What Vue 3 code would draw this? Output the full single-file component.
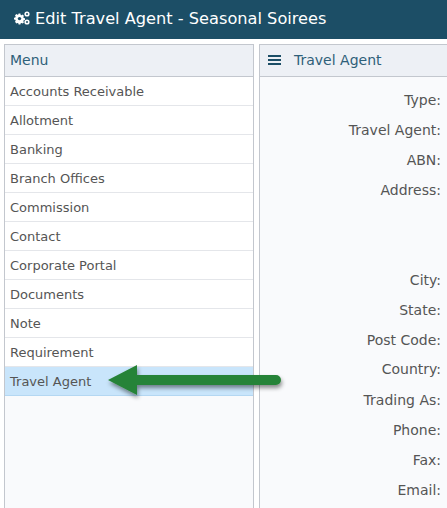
<template>
  <div class="page">
    <header class="topbar">
      <svg class="cogs" viewBox="0 0 16 14" width="16" height="14">
        <g fill="#fff">
          <path d="M5.6 2.6h1.8l.3 1.3.9.4 1.1-.7 1.3 1.3-.7 1.1.4.9 1.3.3v1.8l-1.3.3-.4.9.7 1.1-1.3 1.3-1.1-.7-.9.4-.3 1.3H5.6l-.3-1.3-.9-.4-1.1.7L2 10.8l.7-1.1-.4-.9L1 8.5V6.7l1.3-.3.4-.9L2 4.4l1.3-1.3 1.1.7.9-.4z" transform="translate(-1 0)"/>
          <circle cx="13" cy="3" r="2.6"/>
          <circle cx="13" cy="11" r="2.6"/>
        </g>
        <circle cx="5.5" cy="7.6" r="1.7" fill="#1c4e66"/>
        <circle cx="13" cy="3" r="1" fill="#1c4e66"/>
        <circle cx="13" cy="11" r="1" fill="#1c4e66"/>
      </svg>
      <span>Edit Travel Agent - Seasonal Soirees</span>
    </header>

    <div class="columns">
      <aside class="panel menu">
        <div class="panel-head">Menu</div>
        <ul>
          <li v-for="item in menu" :key="item" :class="{ active: item === 'Travel Agent' }">{{ item }}</li>
        </ul>
      </aside>

      <section class="panel detail">
        <div class="panel-head">
          <span class="burger"><i></i><i></i><i></i></span>
          Travel Agent
        </div>
        <div class="fields">
          <div v-for="f in fields" :key="f.label" class="field" :style="{ height: f.h + 'px' }">{{ f.label }}:</div>
        </div>
      </section>
    </div>

    <svg class="arrow" width="190" height="60" viewBox="0 0 190 60">
      <defs>
        <filter id="sh" x="-10%" y="-30%" width="120%" height="170%">
          <feDropShadow dx="1" dy="3" stdDeviation="2" flood-color="#000" flood-opacity="0.45" />
        </filter>
      </defs>
      <path filter="url(#sh)" fill="#288337"
        d="M8 30 L37 15 V25 H176 a5 5 0 0 1 0 10 H37 V45 Z" />
    </svg>
  </div>
</template>

<script setup>
const menu = [
  'Accounts Receivable',
  'Allotment',
  'Banking',
  'Branch Offices',
  'Commission',
  'Contact',
  'Corporate Portal',
  'Documents',
  'Note',
  'Requirement',
  'Travel Agent'
]

const fields = [
  { label: 'Type', h: 30 },
  { label: 'Travel Agent', h: 30 },
  { label: 'ABN', h: 30 },
  { label: 'Address', h: 90 },
  { label: 'City', h: 30 },
  { label: 'State', h: 30 },
  { label: 'Post Code', h: 29 },
  { label: 'Country', h: 31 },
  { label: 'Trading As', h: 30 },
  { label: 'Phone', h: 30 },
  { label: 'Fax', h: 30 },
  { label: 'Email', h: 30 }
]
</script>

<style>
html, body {
  margin: 0;
  height: 100%;
  overflow: hidden;
}
</style>

<style scoped>
.page {
  position: relative;
  width: 447px;
  height: 508px;
  overflow: hidden;
  background: #fff;
  font-family: "DejaVu Sans", sans-serif;
  font-size: 13px;
  color: #555;
}

.topbar {
  height: 39px;
  background: #1c4e66;
  color: #fff;
  font-size: 16.2px;
  display: flex;
  align-items: center;
  gap: 5px;
  padding: 0 0 3px 14px;
  box-sizing: border-box;
}

.columns {
  display: flex;
  gap: 5px;
  padding: 5px 0 0 4px;
}

.panel {
  height: 480px;
  box-sizing: border-box;
  border: 1px solid #c3c7ce;
  background: #f9fafc;
}

.menu {
  width: 250px;
  flex: none;
}

.detail {
  flex: 1;
  border-right: none;
}

.panel-head {
  height: 32px;
  box-sizing: border-box;
  background: #edf0f5;
  border-bottom: 1px solid #c3c7ce;
  color: #2f6079;
  font-size: 14px;
  display: flex;
  align-items: center;
  padding: 0 0 2px 5px;
}

.detail .panel-head {
  padding-left: 8px;
  gap: 13px;
}

.burger {
  display: flex;
  flex-direction: column;
  gap: 2px;
  width: 13px;
}

.burger i {
  height: 2px;
  background: #1c4e66;
}

ul {
  list-style: none;
  margin: 0;
  padding: 0;
}

li {
  height: 29px;
  box-sizing: border-box;
  background: #fff;
  border-bottom: 1px solid #e4e6ea;
  padding-left: 5px;
  display: flex;
  align-items: center;
}

li.active {
  background: #c9e5fb;
  border-bottom-color: #b4d7f2;
}

.fields {
  padding-top: 8px;
  font-size: 14px;
}

.field {
  width: 181px;
  text-align: right;
  line-height: 30px;
}

.arrow {
  position: absolute;
  left: 100px;
  top: 350px;
}
</style>
